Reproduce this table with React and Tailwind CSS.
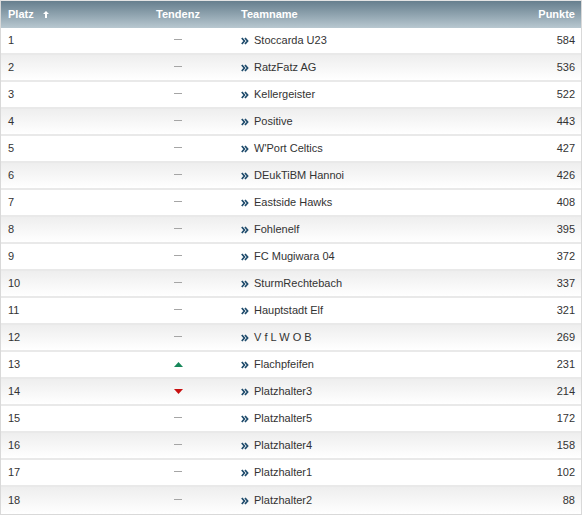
const rows = [
  [1, "", "Stoccarda U23", 584],
  [2, "", "RatzFatz AG", 536],
  [3, "", "Kellergeister", 522],
  [4, "", "Positive", 443],
  [5, "", "W'Port Celtics", 427],
  [6, "", "DEukTiBM Hannoi", 426],
  [7, "", "Eastside Hawks", 408],
  [8, "", "Fohlenelf", 395],
  [9, "", "FC Mugiwara 04", 372],
  [10, "", "SturmRechtebach", 337],
  [11, "", "Hauptstadt Elf", 321],
  [12, "", "V f L W O B", 269],
  [13, "up", "Flachpfeifen", 231],
  [14, "down", "Platzhalter3", 214],
  [15, "", "Platzhalter5", 172],
  [16, "", "Platzhalter4", 158],
  [17, "", "Platzhalter1", 102],
  [18, "", "Platzhalter2", 88],
];

function Trend({ t }) {
  if (t === "up")
    return (
      <svg width="9" height="5" viewBox="0 0 9 5">
        <polygon points="4.5,0 9,5 0,5" fill="#17875a" />
      </svg>
    );
  if (t === "down")
    return (
      <svg width="9" height="5" viewBox="0 0 9 5">
        <polygon points="0,0 9,0 4.5,5" fill="#c81010" />
      </svg>
    );
  return <div className="w-[8px] h-[1px] bg-[#a5a5a5] -mt-[2px]" />;
}

function Chevron() {
  return (
    <svg width="8" height="8" viewBox="0 0 8 8" className="mr-[5px] mt-[1px]">
      <path d="M0.8 1 L3.4 4 L0.8 7 M4 1 L6.6 4 L4 7" stroke="#1d4a6b" strokeWidth="1.7" fill="none" />
    </svg>
  );
}

export default function App() {
  return (
    <div className="w-[583px] h-[516px] bg-white font-['Liberation_Sans',Arial,sans-serif] text-[11px] text-[#333]">
      <div className="w-[582px] border border-[#d9d9d9] border-t-[#e4e4e4]">
        <div className="grid grid-cols-[120px_114px_1fr_90px] h-[27px] items-center bg-gradient-to-b from-[#677f8e] to-[#b8c8d0] text-white font-bold">
          <div className="pl-[7px] flex items-center gap-[9px]">
            Platz
            <svg width="6" height="7" viewBox="0 0 6 7">
              <polygon points="3,0 6,3 4,3 4,7 2,7 2,3 0,3" fill="#fff" />
            </svg>
          </div>
          <div className="text-center">Tendenz</div>
          <div className="pl-[6px]">Teamname</div>
          <div className="text-right pr-[6px]">Punkte</div>
        </div>
        {rows.map(([p, t, name, pts], i) => (
          <div
            key={p}
            className={
              "grid grid-cols-[120px_114px_1fr_90px] h-[27px] items-center border-b-2 border-[#e9e9e9] last:border-b-0 " +
              (i % 2 === 1 ? "bg-gradient-to-b from-[#eeeeee] to-[#ffffff]" : "bg-white")
            }
          >
            <div className="pl-[7px]">{p}</div>
            <div className="flex justify-center items-center">
              <Trend t={t} />
            </div>
            <div className="pl-[6px] flex items-center">
              <Chevron />
              {name}
            </div>
            <div className="text-right pr-[6px]">{pts}</div>
          </div>
        ))}
      </div>
    </div>
  );
}
